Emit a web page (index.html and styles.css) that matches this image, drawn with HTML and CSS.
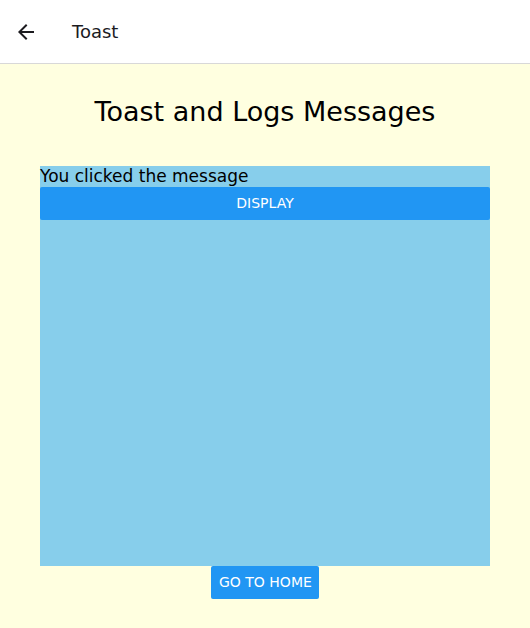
FILE: index.html
```html
<!DOCTYPE html>
<html>
<head>
<meta charset="utf-8">
<link rel="stylesheet" href="styles.css">
</head>
<body>
<header class="appbar">
  <button class="back" aria-label="Back">
    <svg width="24" height="24" viewBox="0 0 24 24"><path d="M20 11H7.83l5.59-5.59L12 4l-8 8 8 8 1.41-1.41L7.83 13H20v-2z" fill="#1c1b1f"/></svg>
  </button>
  <div class="title">Toast</div>
</header>
<main class="page">
  <h1 class="heading">Toast and Logs Messages</h1>
  <section class="box">
    <div class="msg">You clicked the message</div>
    <button class="btn wide">DISPLAY</button>
  </section>
  <button class="btn home">GO TO HOME</button>
</main>
</body>
</html>
```
FILE: styles.css
```css
html, body {
  margin: 0;
  padding: 0;
  height: 100%;
}
body {
  font-family: "DejaVu Sans", sans-serif;
  background: #ffffe0;
  display: flex;
  flex-direction: column;
}
.appbar {
  height: 63px;
  background: #fff;
  border-bottom: 1px solid #d8d8d8;
  display: flex;
  align-items: center;
  flex-shrink: 0;
}
.back {
  margin-left: 14px;
  width: 24px;
  height: 24px;
  padding: 0;
  border: 0;
  background: none;
  display: flex;
}
.title {
  margin-left: 34px;
  font-size: 18px;
  color: #1c1b1f;
}
.page {
  flex: 1;
  display: flex;
  flex-direction: column;
  align-items: center;
}
.heading {
  margin: 31px 0 0;
  font-size: 27px;
  font-weight: normal;
  line-height: 34px;
  color: #000;
}
.box {
  margin-top: 37px;
  width: 450px;
  height: 400px;
  background: #87ceeb;
  display: flex;
  flex-direction: column;
}
.msg {
  font-size: 17px;
  line-height: 21px;
  color: #000;
}
.btn {
  font-family: "DejaVu Sans", sans-serif;
  background: #2196f3;
  color: #fff;
  border: 0;
  border-radius: 2px;
  font-size: 14px;
  line-height: 16px;
  height: 33px;
  padding: 0 8px 1px;
  white-space: nowrap;
}
.wide {
  width: 100%;
}
.home {
  width: 108px;
}
```
